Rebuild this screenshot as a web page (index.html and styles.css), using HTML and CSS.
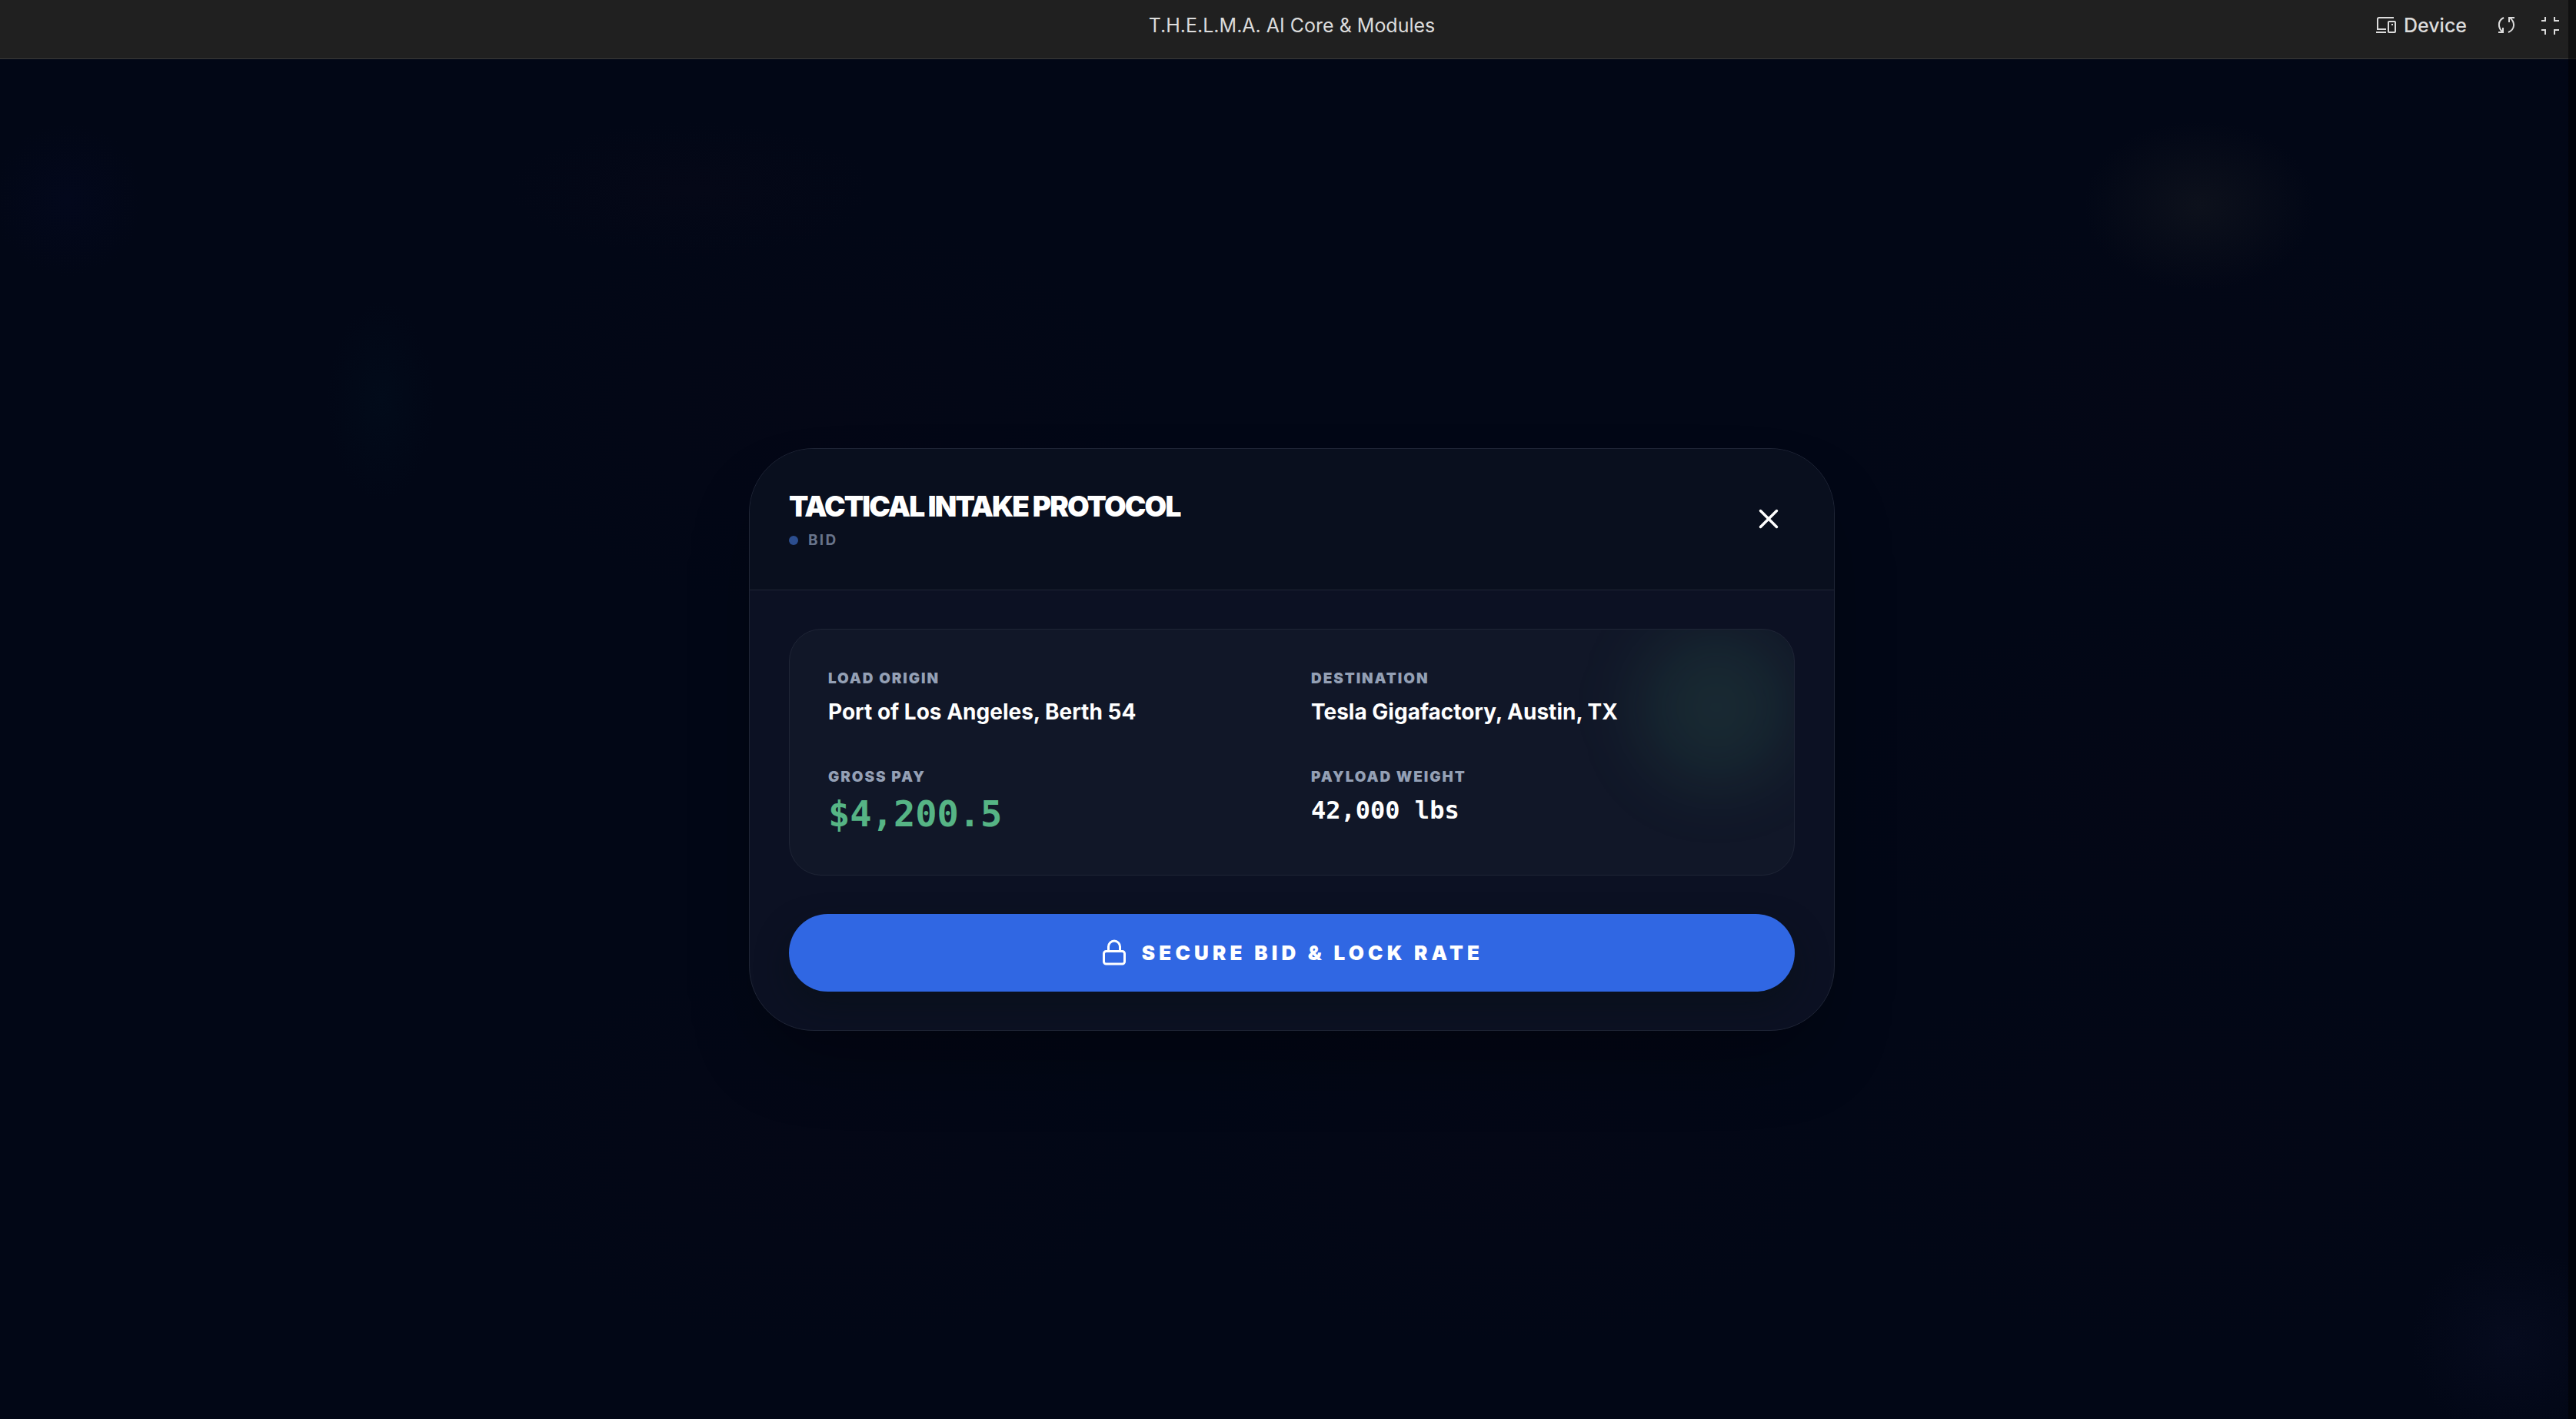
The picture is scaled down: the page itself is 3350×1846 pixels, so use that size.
FILE: index.html
```html
<!DOCTYPE html>
<html lang="en">

<head>
    <meta charset="UTF-8">
    <meta name="viewport" content="width=device-width, initial-scale=1.0">
    <title>T.H.E.L.M.A. AI Core &amp; Modules</title>
    <link rel="stylesheet" href="styles.css">
</head>

<body>

    <div class="app">
        <header class="topbar">
            <span class="topbar-title">T.H.E.L.M.A. AI Core &amp; Modules</span>
            <div class="topbar-actions">
                <button type="button" class="device-btn">
                    <svg width="28" height="24" viewBox="0 0 28 24" fill="none" stroke="currentColor" stroke-width="2">
                        <path d="M24 2H5Q3 2 3 4V17H14M1 21H14" />
                        <rect x="17" y="7" width="9" height="14" rx="1" />
                        <path d="M21 11h2" />
                    </svg>
                    Device
                </button>
                <button type="button" class="icon-btn" aria-label="Reload">
                    <svg width="24" height="24" viewBox="0 0 24 24" fill="none" stroke="currentColor" stroke-width="2">
                        <path d="M10 2C2 6 2 15 9 21M3 21H9V15" />
                        <path d="M16 21C25 17 25 8 18 2M24 2H17V8" />
                    </svg>
                </button>
                <button type="button" class="icon-btn" aria-label="Exit full screen">
                    <svg width="24" height="24" viewBox="0 0 24 24" fill="none" stroke="currentColor" stroke-width="2">
                        <path d="M1 6H6V1M18 1V6H24M1 18H6V24M18 24V18H24" />
                    </svg>
                </button>
            </div>
        </header>

        <main class="stage">
            <div class="modal" role="dialog" aria-labelledby="modalTitle">
                <div class="modal-header">
                    <div class="modal-heading">
                        <h2 id="modalTitle">TACTICAL INTAKE PROTOCOL</h2>
                        <p class="status"><span class="status-dot"></span>BID</p>
                    </div>
                    <button type="button" class="close-btn" aria-label="Close">
                        <svg width="42" height="42" viewBox="0 0 24 24" fill="none" stroke="currentColor" stroke-width="2" stroke-linecap="round">
                            <path d="M18 6 6 18M6 6l12 12" />
                        </svg>
                    </button>
                </div>
                <div class="modal-body">
                    <dl class="load-card">
                        <div class="field">
                            <dt>LOAD ORIGIN</dt>
                            <dd>Port of Los Angeles, Berth 54</dd>
                        </div>
                        <div class="field">
                            <dt>DESTINATION</dt>
                            <dd>Tesla Gigafactory, Austin, TX</dd>
                        </div>
                        <div class="field">
                            <dt>GROSS PAY</dt>
                            <dd class="pay">$4,200.5</dd>
                        </div>
                        <div class="field">
                            <dt>PAYLOAD WEIGHT</dt>
                            <dd class="weight">42,000 lbs</dd>
                        </div>
                    </dl>
                    <button type="button" class="bid-btn">
                        <svg width="36" height="36" viewBox="0 0 24 24" fill="none" stroke="currentColor" stroke-width="2" stroke-linecap="round" stroke-linejoin="round">
                            <rect x="3" y="11" width="18" height="11" rx="2" />
                            <path d="M7 11V7a5 5 0 0 1 10 0v4" />
                        </svg>
                        SECURE BID &amp; LOCK RATE
                    </button>
                </div>
            </div>
        </main>
    </div>

</body>

</html>
```
FILE: styles.css
```css
* {
    box-sizing: border-box;
}

body {
    font-family: Inter, "Liberation Sans", sans-serif;
    background-color: #020716;
    margin: 0;
    color: #ffffff;
    overflow: hidden;
}

/* Scrollbar track over the right edge */
body::after {
    content: "";
    position: absolute;
    top: 0;
    right: 0;
    bottom: 0;
    width: 10px;
    background: rgba(0, 0, 0, 0.5);
}

button {
    border: none;
    padding: 0;
    background: none;
    color: inherit;
    font: inherit;
    cursor: pointer;
}

/* The preview pane runs slightly wider than the window */
.app {
    width: calc(100% + 10px);
    height: 100vh;
    display: flex;
    flex-direction: column;
}

.topbar {
    display: grid;
    grid-template-columns: 1fr auto 1fr;
    align-items: center;
    height: 77px;
    padding: 0 32px 10px;
    background: #202020;
    border-bottom: 1px solid #3a3a3a;
    color: #dcdcdc;
    font-size: 25px;
    line-height: 30px;
}

.topbar-title {
    grid-column: 2;
}

.topbar-actions {
    display: flex;
    justify-content: flex-end;
    align-items: center;
    gap: 34px;
}

.topbar svg {
    display: block;
}

.device-btn {
    display: flex;
    align-items: center;
    gap: 9px;
    margin-right: 4px;
    font-weight: 500;
}

.stage {
    flex: 1;
    display: flex;
    justify-content: center;
    align-items: center;
    background:
        radial-gradient(ellipse 150px 110px at 2860px 190px, #0d111c, transparent),
        radial-gradient(circle 130px at 3265px 1670px, #060b1e, transparent),
        radial-gradient(ellipse 240px 90px at 900px 170px, #050817, transparent),
        radial-gradient(circle 100px at 88px 183px, #03081c, transparent),
        radial-gradient(ellipse 70px 130px at 495px 445px, #020b1a, transparent),
        radial-gradient(ellipse 440px 260px at 1060px 460px, #040716, transparent),
        radial-gradient(ellipse 440px 260px at 2820px 460px, #040716, transparent),
        radial-gradient(ellipse 440px 260px at 2820px 960px, #040716, transparent),
        radial-gradient(ellipse 440px 260px at 1060px 1420px, #040716, transparent),
        radial-gradient(ellipse 440px 260px at 1960px 1420px, #040716, transparent),
        radial-gradient(ellipse 440px 260px at 2820px 1420px, #040716, transparent),
        #020716;
}

.modal {
    width: 1412px;
    max-width: 90%;
    background: #0c1123;
    border: 1px solid #1f2536;
    border-radius: 84px;
    box-shadow: 0 50px 100px -30px rgba(0, 0, 0, 0.4);
    overflow: hidden;
}

.modal-header {
    display: flex;
    justify-content: space-between;
    align-items: center;
    padding: 50px 51px;
    background: #090f1e;
    border-bottom: 1px solid #1f2536;
}

.modal-heading {
    display: flex;
    flex-direction: column;
    gap: 5px;
}

h2 {
    margin: 0;
    font-size: 37px;
    line-height: 50px;
    font-weight: 900;
    letter-spacing: -0.05em;
}

.status {
    display: flex;
    align-items: center;
    gap: 13px;
    margin: 0;
    color: #68748b;
    font-size: 19px;
    line-height: 28px;
    font-weight: 700;
    letter-spacing: 0.12em;
}

.status-dot {
    width: 12px;
    height: 12px;
    border-radius: 50%;
    background: #2c4e8f;
}

.close-btn {
    display: flex;
    padding: 13px;
    border-radius: 50%;
}

.modal-body {
    display: flex;
    flex-direction: column;
    gap: 50px;
    padding: 50px 51px;
}

.load-card {
    position: relative;
    display: grid;
    grid-template-columns: 1fr 1fr;
    gap: 50px;
    margin: 0;
    padding: 50px 50px 54px;
    background: #111728;
    border: 1px solid #1f2536;
    border-radius: 42px;
    overflow: hidden;
}

/* Green glow in the corner of the card */
.load-card::before {
    content: "";
    position: absolute;
    top: 0;
    right: 0;
    width: 202px;
    height: 202px;
    border-radius: 50%;
    background: rgba(70, 170, 120, 0.12);
    filter: blur(42px);
}

.field {
    position: relative;
    display: flex;
    flex-direction: column;
    gap: 8px;
}

dt {
    color: #94a0b5;
    font-size: 19px;
    line-height: 28px;
    font-weight: 900;
    letter-spacing: 0.1em;
}

dd {
    margin: 0;
    font-size: 28px;
    line-height: 42px;
    font-weight: 700;
}

.pay,
.weight {
    font-family: "DejaVu Sans Mono", monospace;
}

.pay {
    color: #56b485;
    font-size: 47px;
    line-height: 51px;
}

.weight {
    font-size: 32px;
}

.bid-btn {
    display: flex;
    justify-content: center;
    align-items: center;
    gap: 18px;
    height: 101px;
    border-radius: 51px;
    background: #3067e3;
    box-shadow: 0 20px 40px rgba(8, 16, 24, 0.6);
    font-size: 26px;
    font-weight: 900;
    letter-spacing: 0.2em;
}
```
